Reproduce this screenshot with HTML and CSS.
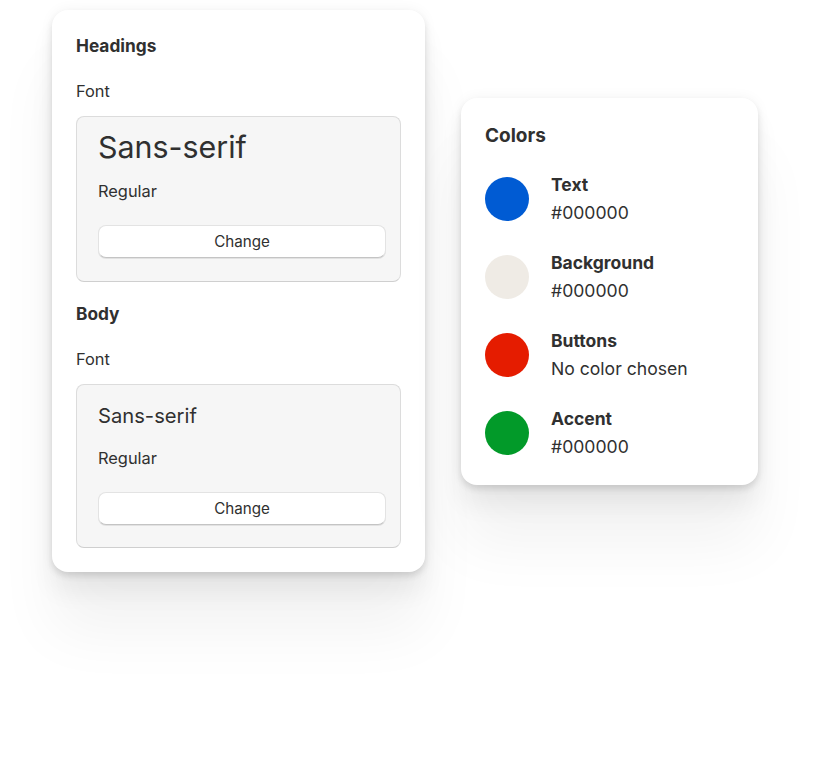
FILE: index.html
```html
<!DOCTYPE html>
<html lang="en">
<head>
<meta charset="utf-8">
<title>Typography and colors</title>
<link rel="stylesheet" href="styles.css">
</head>
<body>
<main class="stage">
  <section class="card card-type">
    <h2 class="card-title">Headings</h2>
    <div class="field-label">Font</div>
    <div class="font-box">
      <div class="font-name font-name-lg">Sans-serif</div>
      <div class="font-style">Regular</div>
      <button class="btn">Change</button>
    </div>
    <h2 class="card-title card-title-2">Body</h2>
    <div class="field-label field-label-2">Font</div>
    <div class="font-box font-box-2">
      <div class="font-name font-name-sm">Sans-serif</div>
      <div class="font-style">Regular</div>
      <button class="btn">Change</button>
    </div>
  </section>

  <section class="card card-colors">
    <h2 class="colors-title">Colors</h2>
    <ul class="swatches">
      <li class="swatch-row">
        <span class="dot dot-blue"></span>
        <div class="swatch-text"><div class="swatch-name">Text</div><div class="swatch-value">#000000</div></div>
      </li>
      <li class="swatch-row">
        <span class="dot dot-beige"></span>
        <div class="swatch-text"><div class="swatch-name">Background</div><div class="swatch-value">#000000</div></div>
      </li>
      <li class="swatch-row">
        <span class="dot dot-red"></span>
        <div class="swatch-text"><div class="swatch-name">Buttons</div><div class="swatch-value">No color chosen</div></div>
      </li>
      <li class="swatch-row">
        <span class="dot dot-green"></span>
        <div class="swatch-text"><div class="swatch-name">Accent</div><div class="swatch-value">#000000</div></div>
      </li>
    </ul>
  </section>
</main>
</body>
</html>
```

FILE: styles.css
```css
* { box-sizing: border-box; }
html, body { margin: 0; padding: 0; background: #ffffff; }
body {
  font-family: Inter, "Noto Sans", "Liberation Sans", sans-serif;
  color: #303030;
  width: 817px;
  height: 766px;
  overflow: hidden;
}
.stage {
  display: flex;
  align-items: flex-start;
  padding: 10px 0 0 52px;
  gap: 36px;
}
.card {
  background: #ffffff;
  border-radius: 16px;
  box-shadow:
    0 4px 6px rgba(0,0,0,0.10),
    0 20px 25px rgba(0,0,0,0.06),
    0 60px 60px rgba(0,0,0,0.05),
    0 0 14px rgba(0,0,0,0.05);
}
.card-type {
  width: 373px;
  padding: 24px 24px 24px 24px;
}
.card-colors {
  width: 297px;
  margin-top: 88px;
  padding: 26px 24px 27px 24px;
}
.card-title {
  margin: 0;
  font-size: 17.3px;
  font-weight: 650;
  line-height: 24px;
  color: #303030;
}
.card-title-2 { margin-top: 20px; }
.field-label {
  margin-top: 23px;
  font-size: 16.4px;
  line-height: 20px;
}
.font-box {
  margin-top: 15px;
  background: #f6f6f6;
  border: 1px solid #dcdcdc;
  border-bottom-color: #cfcfcf;
  border-radius: 8px;
  padding: 9px 14px 23px 21px;
}
.font-box-2 { padding-top: 17px; padding-bottom: 22px; }
.font-name { font-weight: 400; color: #303030; }
.font-name-lg { font-size: 30.4px; line-height: 42px; }
.font-name-sm { font-size: 20.2px; line-height: 28px; }
.font-style {
  margin-top: 13px;
  font-size: 16.4px;
  line-height: 20px;
}
.font-box-2 .font-style { margin-top: 18px; }
.btn {
  display: block;
  width: 100%;
  margin-top: 24px;
  height: 33px;
  border: 1px solid #e3e3e3;
  border-bottom-color: #c4c4c4;
  border-radius: 8px;
  background: #ffffff;
  font-family: inherit;
  font-size: 15.2px;
  color: #303030;
  box-shadow: 0 1px 0 rgba(0,0,0,0.08);
  padding: 0;
}
.colors-title {
  margin: 0;
  font-size: 19px;
  font-weight: 650;
  line-height: 24px;
}
.swatches {
  list-style: none;
  margin: 26px 0 0 0;
  padding: 0;
  display: flex;
  flex-direction: column;
  gap: 28px;
}
.swatch-row {
  display: flex;
  align-items: center;
  gap: 22px;
}
.dot {
  width: 44px;
  height: 44px;
  border-radius: 50%;
  flex: none;
}
.dot-blue { background: #005bd3; }
.dot-beige { background: #efebe5; }
.dot-red { background: #e51c00; }
.dot-green { background: #029a29; }
.swatch-name {
  font-size: 17.5px;
  font-weight: 650;
  line-height: 22px;
}
.swatch-value {
  margin-top: 6px;
  font-size: 17.6px;
  line-height: 22px;
}
```
